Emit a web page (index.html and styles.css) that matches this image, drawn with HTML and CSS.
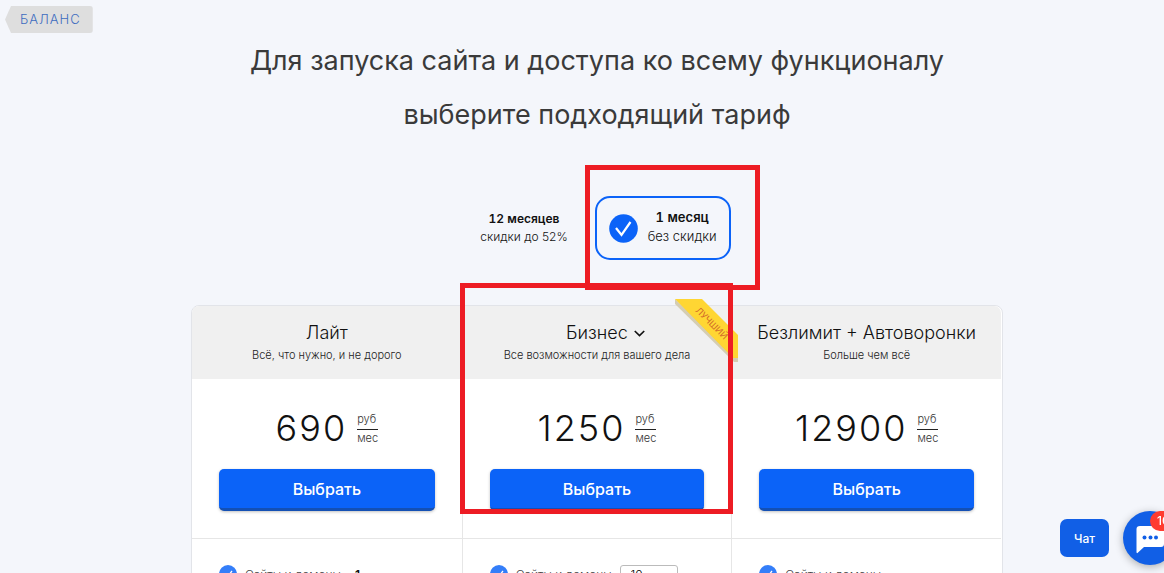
FILE: index.html
```html
<!DOCTYPE html>
<html lang="ru">
<head>
    <meta charset="UTF-8">
    <title>Выбор тарифа</title>
    <link rel="stylesheet" href="styles.css">
</head>
<body>
    <a class="balance" href="#">БАЛАНС</a>

    <main class="page">
        <h1 class="page__title">Для запуска сайта и доступа ко всему функционалу<br>выберите подходящий тариф</h1>

        <form>
            <div class="periods">
                <label class="period">
                    <input class="period__radio" type="radio" name="period" value="12">
                    <span class="period__text"><b>12 месяцев</b><span>скидки до 52%</span></span>
                </label>
                <label class="period period--active">
                    <input class="period__radio" type="radio" name="period" value="1" checked>
                    <svg class="period__check" viewBox="0 0 29 29">
                        <circle cx="14.5" cy="14.5" r="14.3" fill="#0b63f8"/>
                        <path d="M7 14 L12.5 21 L21.5 8" fill="none" stroke="#fff" stroke-width="2.2"/>
                    </svg>
                    <span class="period__text"><b>1 месяц</b><span>без скидки</span></span>
                    <span class="frame frame--period"></span>
                </label>
            </div>

            <div class="plans">
                <section class="plan">
                    <header class="plan__head">
                        <h2>Лайт</h2>
                        <p>Всё, что нужно, и не дорого</p>
                    </header>
                    <div class="plan__buy">
                        <div class="price">
                            <span class="price__value">690</span>
                            <span class="price__unit"><span>руб</span><span>мес</span></span>
                        </div>
                        <button class="choose" type="button">Выбрать</button>
                    </div>
                    <div class="feature">
                        <svg class="feature__check" viewBox="0 0 18 18"><circle cx="9" cy="9" r="9" fill="#347ef9"/><path d="M5 9 L8 12.5 L13 6" fill="none" stroke="#fff" stroke-width="1.3"/></svg>
                        <span>Сайты и домены</span>
                        <b>1</b>
                    </div>
                </section>

                <section class="plan">
                    <header class="plan__head">
                        <h2>Бизнес <svg class="chevron" viewBox="0 0 10 6"><path d="M0.7 0.7 L5 5 L9.3 0.7" fill="none" stroke="#111" stroke-width="1.5"/></svg></h2>
                        <p>Все возможности для вашего дела</p>
                    </header>
                    <div class="plan__buy">
                        <div class="price">
                            <span class="price__value">1250</span>
                            <span class="price__unit"><span>руб</span><span>мес</span></span>
                        </div>
                        <button class="choose" type="button">Выбрать</button>
                    </div>
                    <div class="feature">
                        <svg class="feature__check" viewBox="0 0 18 18"><circle cx="9" cy="9" r="9" fill="#347ef9"/><path d="M5 9 L8 12.5 L13 6" fill="none" stroke="#fff" stroke-width="1.3"/></svg>
                        <label for="sites">Сайты и домены</label>
                        <select class="feature__select" id="sites">
                            <option>10</option>
                        </select>
                    </div>
                    <svg class="ribbon" viewBox="0 0 63 64">
                        <path d="M0 0 L63 59 V63 H59 L0 5 Z" fill="#d5cdb2"/>
                        <path d="M0 0 H27 L63 36 V59 H58 Z" fill="#ffd633"/>
                        <text class="ribbon__text" x="37" y="24" text-anchor="middle" dominant-baseline="central" transform="rotate(45 37 24)">ЛУЧШИЙ</text>
                    </svg>
                    <span class="frame frame--plan"></span>
                </section>

                <section class="plan">
                    <header class="plan__head">
                        <h2>Безлимит + Автоворонки</h2>
                        <p>Больше чем всё</p>
                    </header>
                    <div class="plan__buy">
                        <div class="price">
                            <span class="price__value">12900</span>
                            <span class="price__unit"><span>руб</span><span>мес</span></span>
                        </div>
                        <button class="choose" type="button">Выбрать</button>
                    </div>
                    <div class="feature">
                        <svg class="feature__check" viewBox="0 0 18 18"><circle cx="9" cy="9" r="9" fill="#347ef9"/><path d="M5 9 L8 12.5 L13 6" fill="none" stroke="#fff" stroke-width="1.3"/></svg>
                        <span>Сайты и домены</span>
                    </div>
                </section>
            </div>
        </form>
    </main>

    <div class="chat">
        <button class="chat__label" type="button">Чат</button>
        <button class="chat__round" type="button">
            <svg class="chat__icon" viewBox="0 0 54 54">
                <path d="M17 15 H38 Q41 15 41 18 V33 Q41 36 38 36 H21 L14.500 42 Q13.500 42.500 13.500 41 V18 Q13.500 15 17 15 Z" fill="#fff"/>
                <circle cx="21.500" cy="26.500" r="2" fill="#115fe6"/>
                <circle cx="27.500" cy="26.500" r="2" fill="#115fe6"/>
                <circle cx="33" cy="26.500" r="2" fill="#115fe6"/>
            </svg>
            <span class="chat__badge">10</span>
        </button>
    </div>
</body>
</html>
```

FILE: styles.css
```css
* {
    box-sizing: border-box;
}

body {
    margin: 0;
    height: 100vh;
    overflow: hidden;
    background-color: #f4f6fb;
    color: #111;
    font-family: Inter, "Liberation Sans", sans-serif;
    font-weight: 300;
}

h1, h2, p {
    margin: 0;
    font-weight: 300;
}

/* back link with the arrow-shaped left side */
.balance {
    position: absolute;
    top: 6px;
    left: 5px;
    padding: 0 12px 0 15px;
    border-radius: 0 3px 3px 0;
    background-color: #dedede;
    clip-path: polygon(6px 0, 100% 0, 100% 100%, 6px 100%, 0 50%);
    color: #3d6cc0;
    font-size: 13px;
    line-height: 27px;
    letter-spacing: 1px;
    text-decoration: none;
}

.page {
    padding: 34px 0 0 30px;
}

.page__title {
    color: #3a3a3a;
    font-size: 27px;
    font-weight: 400;
    line-height: 54px;
    text-align: center;
}

.periods {
    display: flex;
    justify-content: center;
    gap: 10px;
    margin-top: 54px;
}

.period {
    position: relative;
    display: flex;
    align-items: center;
    gap: 10px;
    height: 64px;
    padding: 0 17px;
    font-size: 12px;
    line-height: 18px;
}

.period--active {
    padding: 0 12px;
    border: 2px solid #0b63f8;
    border-radius: 15px;
    font-size: 13px;
    line-height: 19px;
}

.period__radio {
    position: absolute;
    opacity: 0;
}

.period__check {
    width: 29px;
    height: 29px;
}

.period__text {
    text-align: center;
}

.period--active .period__text {
    padding-bottom: 2px;
}

.period__text > * {
    display: block;
}

.period b {
    font-weight: 600;
    font-variant-numeric: tabular-nums;
}

.plans {
    display: grid;
    grid-template-columns: repeat(3, 1fr);
    max-width: 812px;
    margin: 45px auto 0;
    padding-right: 1px;
    border: 1px solid #e2e4e9;
    border-radius: 8px;
    background-color: white;
}

.plan {
    position: relative;
}

.plan + .plan {
    border-left: 1px solid #e6e6e6;
}

.plan__head {
    height: 73px;
    padding-top: 16px;
    background-color: #f0f0f0;
    text-align: center;
}

.plan:first-child .plan__head {
    border-top-left-radius: 7px;
}

.plan:last-child .plan__head {
    border-top-right-radius: 7px;
}

.plan__head h2 {
    font-size: 18px;
    line-height: 22px;
}

.plan__head p {
    margin-top: 4px;
    color: #222;
    font-size: 11px;
    line-height: 14px;
}

/* the arrow hangs outside so the plan name stays centered */
.chevron {
    width: 11px;
    height: 7px;
    margin: 0 -17px 2px 1px;
}

.plan__buy {
    padding: 27px;
    border-bottom: 1px solid #e6e6e6;
}

.price {
    display: flex;
    justify-content: center;
    align-items: center;
    gap: 10px;
    height: 44px;
}

.price__value {
    font-size: 36px;
    letter-spacing: 2px;
}

.price__unit {
    color: #333;
    font-size: 11px;
    line-height: 16px;
}

.price__unit > * {
    display: block;
}

.price__unit > :first-child {
    padding-bottom: 2px;
    border-bottom: 1px solid #222;
}

.choose {
    display: block;
    width: 100%;
    height: 42px;
    margin-top: 19px;
    padding: 0;
    border: 0;
    border-bottom: 3px solid #1450b4;
    border-radius: 5px;
    background-color: #0b63f8;
    box-shadow: 0 1px 3px rgba(0, 0, 0, 0.25);
    color: white;
    font: 500 16px Inter, "Liberation Sans", sans-serif;
}

.feature {
    display: flex;
    align-items: center;
    gap: 8px;
    height: 70px;
    padding: 0 27px;
    color: #444;
    font-size: 12px;
}

.feature b {
    margin-left: 6px;
    color: #111;
    font-weight: 600;
}

.feature__check {
    width: 18px;
    height: 18px;
}

.feature__select {
    width: 58px;
    height: 18px;
    padding: 0 10px;
    border: 1px solid #bbb;
    border-radius: 3px;
    background-color: white;
    appearance: none;
    font: 300 12px Inter, "Liberation Sans", sans-serif;
}

.ribbon {
    position: absolute;
    top: -7px;
    right: -7px;
    width: 63px;
    height: 64px;
    z-index: 1;
}

.ribbon__text {
    fill: #d0662a;
    font-size: 9px;
    font-weight: 400;
}

/* red highlight frames */
.frame {
    position: absolute;
    z-index: 2;
    border: 5px solid #ed1c24;
    pointer-events: none;
}

.frame--period {
    inset: -33px -31px -32px -12px;
}

.frame--plan {
    top: -23px;
    right: -2px;
    left: -3px;
    height: 231px;
}

.chat {
    position: fixed;
    right: -13px;
    bottom: 8px;
    display: flex;
    align-items: center;
    gap: 14px;
}

.chat button {
    padding: 0;
    border: 0;
    background-color: #115fe6;
    color: white;
    font: 500 12px Inter, "Liberation Sans", sans-serif;
}

.chat .chat__label {
    width: 49px;
    height: 38px;
    border-radius: 7px;
}

.chat .chat__round {
    position: relative;
    width: 54px;
    height: 54px;
    border-radius: 50%;
    box-shadow: 0 2px 8px rgba(0, 0, 0, 0.3);
}

.chat__icon {
    display: block;
}

.chat__badge {
    position: absolute;
    top: 0;
    left: 27px;
    padding: 0 7px;
    border-radius: 10px;
    background-color: #ff3b30;
    line-height: 20px;
}
```
